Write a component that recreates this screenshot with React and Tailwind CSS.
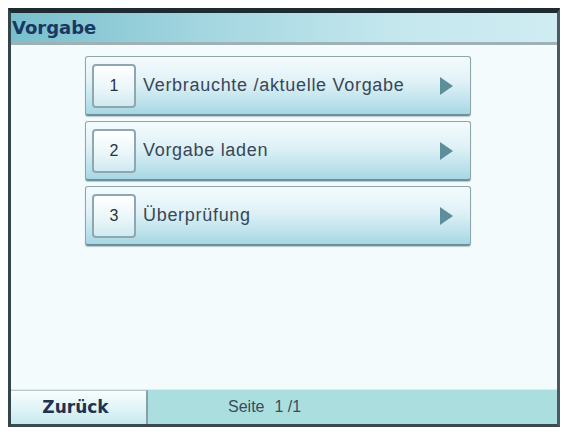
export default function App() {
  const items = [
    { n: "1", label: "Verbrauchte /aktuelle Vorgabe" },
    { n: "2", label: "Vorgabe laden" },
    { n: "3", label: "Überprüfung" },
  ];
  return (
    <div className="w-[567px] h-[432px] bg-white pl-[8px] pr-[7px] pt-[8px] pb-[5px]">
      <div className="w-full h-full flex flex-col border-t-[5px] border-l-[3px] border-r-[3px] border-b-[3px] border-t-[#1e2c31] border-l-[#33444a] border-r-[#4a5a60] border-b-[#3a4a50] bg-[#f3fbfc]">
        {/* Title bar */}
        <div className="h-[32px] shrink-0 flex items-center pl-[1px] bg-[linear-gradient(to_right,#78bfcd,#a3d6e0_35%,#c4e7ee_70%,#cfecf2)] border-b-[3px] border-b-[#9fb1b5]">
          <span className="text-[18px] font-bold text-[#1a3862]" style={{ fontFamily: '"DejaVu Sans", sans-serif' }}>
            Vorgabe
          </span>
        </div>
        {/* Content */}
        <div className="flex-1 flex flex-col gap-[5px] pt-[11px] pl-[74px]" style={{ fontFamily: '"Liberation Sans", Arial, sans-serif' }}>
          {items.map((it) => (
            <div
              key={it.n}
              className="w-[386px] h-[60px] flex items-center pl-[6px] pr-[17px] rounded-[3px] border border-[#8ea5ac] border-b-[2px] border-b-[#6f8f99] bg-[linear-gradient(to_bottom,#f4fbfd,#dff1f6_45%,#b6dfea_85%,#a7d6e3)] shadow-[0_1px_1px_rgba(80,110,120,0.35)]"
            >
              <div className="w-[44px] h-[44px] shrink-0 flex items-center justify-center rounded-[4px] border-[2px] border-[#8fa8b0] bg-[linear-gradient(to_bottom,#ffffff,#e8f5f8_60%,#cfeaf1)] text-[16px] text-[#26323f]">
                {it.n}
              </div>
              <span className="ml-[7px] flex-1 text-[18px] text-[#37475a] tracking-[0.7px] whitespace-nowrap">
                {it.label}
              </span>
              <svg width="13" height="18" viewBox="0 0 13 18" className="shrink-0">
                <polygon points="0,0 13,9 0,18" fill="#5d8f9a" />
              </svg>
            </div>
          ))}
        </div>
        {/* Bottom bar */}
        <div className="h-[35px] shrink-0 flex items-stretch bg-[#abdfdf] border-t border-t-[#d8eef0]">
          <div className="w-[137px] flex items-center justify-center pr-[6px] bg-[linear-gradient(to_bottom,#f8fdfe,#dcf2f5_60%,#c5eaee)] border-r-[2px] border-r-[#8a9fa4] border-t border-t-[#b9c8cb]">
            <span className="text-[17px] font-bold text-[#1f3350]" style={{ fontFamily: '"DejaVu Sans", sans-serif' }}>
              Zurück
            </span>
          </div>
          <div className="flex items-center pl-[80px] text-[16px] text-[#3a4b5c] gap-[10px]" style={{ fontFamily: '"Liberation Sans", Arial, sans-serif' }}>
            <span>Seite</span>
            <span>1 /1</span>
          </div>
        </div>
      </div>
    </div>
  );
}
